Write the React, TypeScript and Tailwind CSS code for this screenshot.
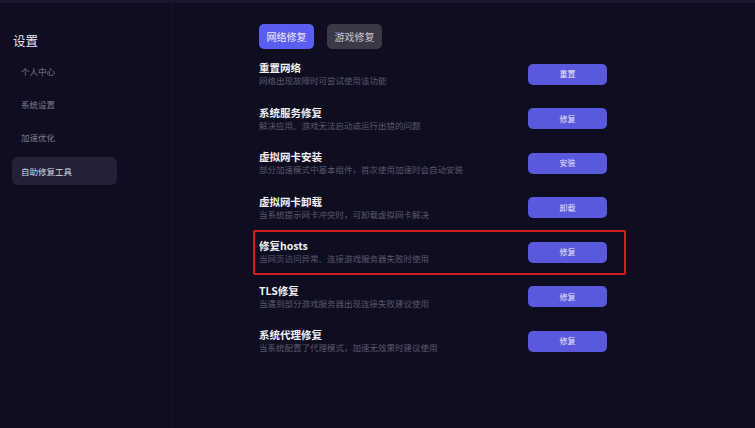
const menu = ['个人中心', '系统设置', '加速优化', '自助修复工具']

const rows = [
  { title: '重置网络', desc: '网络出现故障时可尝试使用该功能', btn: '重置' },
  { title: '系统服务修复', desc: '解决应用、游戏无法启动或运行出错的问题', btn: '修复' },
  { title: '虚拟网卡安装', desc: '部分加速模式中基本组件，首次使用加速时会自动安装', btn: '安装' },
  { title: '虚拟网卡卸载', desc: '当系统提示网卡冲突时，可卸载虚拟网卡解决', btn: '卸载' },
  { title: '修复hosts', desc: '当网页访问异常、连接游戏服务器失败时使用', btn: '修复', hl: true },
  { title: 'TLS修复', desc: '当遇到部分游戏服务器出现连接失败建议使用', btn: '修复' },
  { title: '系统代理修复', desc: '当系统配置了代理模式，加速无效果时建议使用', btn: '修复' },
]

export default function App() {
  return (
    <div
      className="w-[755px] h-[428px] bg-[#0f0e20] text-white flex flex-col overflow-hidden"
      style={{ fontFamily: '"Noto Sans CJK SC", "Noto Sans", sans-serif' }}
    >
      <div className="h-[3px] bg-[#17162c]" />
      <div className="flex flex-1">
        {/* sidebar */}
        <aside className="w-[172px] border-r border-[#15142a] pt-[29px] px-[12px]">
          <div className="text-[12.5px] leading-[18px] pl-[1px] text-[#e8e8f0]">设置</div>
          <div className="mt-[7px] flex flex-col gap-[5.3px]">
            {menu.map((m, i) => (
              <div
                key={m}
                className={
                  'h-[28px] w-[105px] rounded-[6px] flex items-center pl-[9px] text-[8.5px] ' +
                  (i === 3 ? 'bg-[#222136] text-[#d8d8e4]' : 'text-[#7d7c8e]')
                }
              >
                {m}
              </div>
            ))}
          </div>
        </aside>

        {/* main */}
        <main className="flex-1 pl-[81px] pt-[21px]">
          <div className="flex gap-[13px] pl-[6px]">
            <div className="w-[55px] h-[25px] rounded-[5px] bg-[#5b5cf0] flex items-center justify-center text-[10px] text-[#eef]">
              网络修复
            </div>
            <div className="w-[55px] h-[25px] rounded-[5px] bg-[#3a3946] flex items-center justify-center text-[10px] text-[#c9c9d2]">
              游戏修复
            </div>
          </div>
          <div className="mt-[3px] w-[373px] flex flex-col">
            {rows.map((r) => (
              <div
                key={r.title}
                className={
                  'h-[44.5px] flex items-center justify-between pl-[4px] pr-[17px] border-2 rounded-[2px] ' +
                  (r.hl ? 'border-[#d11f1f]' : 'border-transparent')
                }
              >
                <div className="flex flex-col">
                  <div className="text-[10.5px] leading-[13px] font-bold text-[#f2f2f6]">{r.title}</div>
                  <div className="text-[8.5px] leading-[13px] text-[#5a596c]">{r.desc}</div>
                </div>
                <div className="w-[79px] h-[21px] rounded-[5px] bg-[#5a59de] flex items-center justify-center text-[8px] text-[#e8e8f8]">
                  {r.btn}
                </div>
              </div>
            ))}
          </div>
        </main>
      </div>
    </div>
  )
}
